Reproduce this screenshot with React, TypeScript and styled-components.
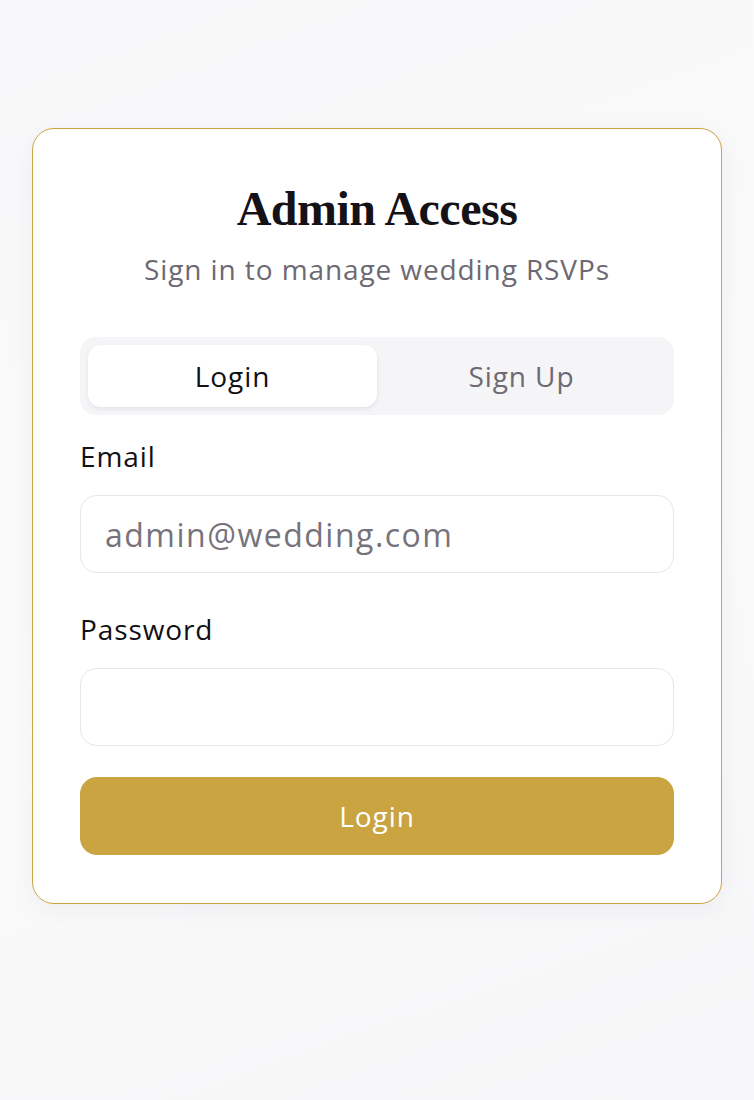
import { FC, useState } from 'react';
import styled, { createGlobalStyle } from 'styled-components';

const GlobalStyle = createGlobalStyle`
  html, body {
    margin: 0;
    padding: 0;
  }

  body {
    min-height: 1100px;
    background: linear-gradient(160deg, #f8f7f9 0%, #fbfafb 55%, #f6f5f7 100%);
    font-family: 'Open Sans', 'Noto Sans', sans-serif;
    color: #16141a;
  }

  * {
    box-sizing: border-box;
  }
`;

const Page = styled.main`
  padding: 128px 32px 0;
`;

const Card = styled.section`
  background: #ffffff;
  border: 1.5px solid #c9a543;
  border-radius: 22px;
  padding: 48px 47px 48px;
  box-shadow: 0 6px 24px rgba(40, 30, 60, 0.05);
`;

const Header = styled.header`
  display: flex;
  flex-direction: column;
  align-items: center;
  gap: 8px;
  margin-bottom: 48px;
`;

const Title = styled.h1`
  margin: 0;
  font-family: 'Liberation Serif', 'DejaVu Serif', serif;
  font-weight: 700;
  font-size: 48px;
  line-height: 64px;
  letter-spacing: -0.5px;
  color: #141216;
`;

const Subtitle = styled.p`
  margin: 0;
  font-size: 28px;
  line-height: 40px;
  letter-spacing: 0.9px;
  color: #6d6972;
`;

const Tabs = styled.div`
  display: grid;
  grid-template-columns: 1fr 1fr;
  padding: 8px;
  background: #f5f4f7;
  border-radius: 16px;
  margin-bottom: 21px;
`;

const Tab = styled.button<{ $active?: boolean }>`
  height: 62px;
  border: none;
  border-radius: 13px;
  font-family: inherit;
  font-size: 28px;
  font-weight: 500;
  letter-spacing: 0.9px;
  cursor: pointer;
  background: ${(p) => (p.$active ? '#ffffff' : 'transparent')};
  color: ${(p) => (p.$active ? '#111014' : '#6d6972')};
  box-shadow: ${(p) => (p.$active ? '0 2px 4px rgba(30, 20, 50, 0.08)' : 'none')};
`;

const Form = styled.form`
  display: flex;
  flex-direction: column;
`;

const Field = styled.div`
  display: flex;
  flex-direction: column;
  gap: 19px;
  margin-bottom: 36px;

  &:last-of-type {
    margin-bottom: 31px;
  }
`;

const Label = styled.label`
  font-size: 28px;
  line-height: 40px;
  font-weight: 500;
  letter-spacing: 0.9px;
  color: #111014;
`;

const Input = styled.input`
  height: 78px;
  border: 1.5px solid #e7e5ea;
  border-radius: 17px;
  padding: 0 24px;
  font-family: inherit;
  font-size: 32px;
  letter-spacing: 1.5px;
  color: #141216;
  background: #ffffff;
  outline: none;

  &::placeholder {
    color: #77737c;
  }
`;

const Submit = styled.button`
  height: 78px;
  border: none;
  border-radius: 17px;
  background: #c9a440;
  color: #ffffff;
  font-family: inherit;
  font-size: 28px;
  font-weight: 500;
  letter-spacing: 0.9px;
  cursor: pointer;
`;

const App: FC = () => {
  const [mode, setMode] = useState<'login' | 'signup'>('login');

  return (
    <>
      <GlobalStyle />
      <Page>
        <Card>
          <Header>
            <Title>Admin Access</Title>
            <Subtitle>Sign in to manage wedding RSVPs</Subtitle>
          </Header>

          <Tabs>
            <Tab $active={mode === 'login'} onClick={() => setMode('login')}>
              Login
            </Tab>
            <Tab $active={mode === 'signup'} onClick={() => setMode('signup')}>
              Sign Up
            </Tab>
          </Tabs>

          <Form onSubmit={(e) => e.preventDefault()}>
            <Field>
              <Label htmlFor="email">Email</Label>
              <Input id="email" type="email" placeholder="admin@wedding.com" />
            </Field>
            <Field>
              <Label htmlFor="password">Password</Label>
              <Input id="password" type="password" />
            </Field>
            <Submit type="submit">{mode === 'login' ? 'Login' : 'Sign Up'}</Submit>
          </Form>
        </Card>
      </Page>
    </>
  );
};

export default App;
